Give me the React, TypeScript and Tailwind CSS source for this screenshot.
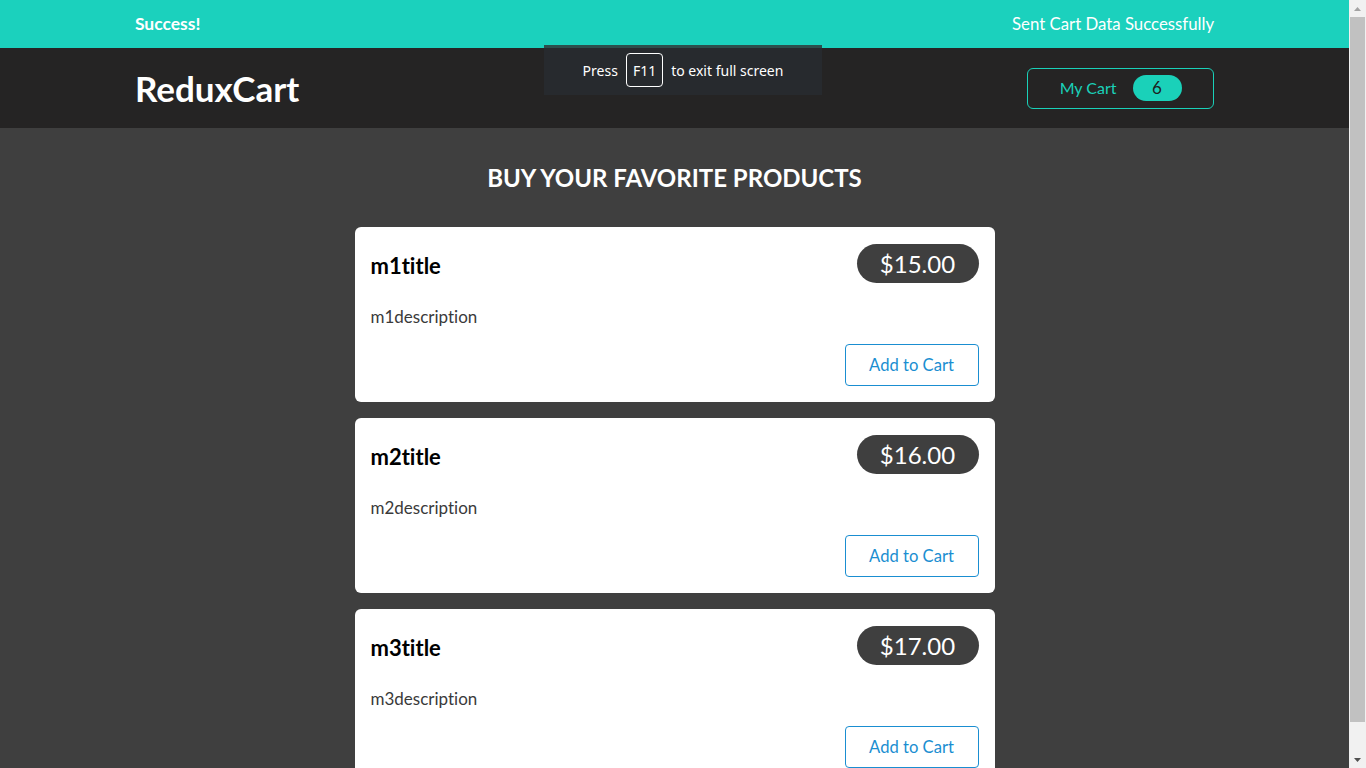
const products = [
  { id: 'm1', title: 'm1title', price: 15, description: 'm1description' },
  { id: 'm2', title: 'm2title', price: 16, description: 'm2description' },
  { id: 'm3', title: 'm3title', price: 17, description: 'm3description' },
];

function Notification() {
  return (
    <section className="w-full h-12 shrink-0 bg-[#1bd1bd] flex items-center justify-between px-[10%] text-white">
      <h2 className="text-[17.5px] font-bold">Success!</h2>
      <p className="text-[16.8px]">Sent Cart Data Successfully</p>
    </section>
  );
}

function MainHeader() {
  return (
    <header className="w-full h-20 shrink-0 bg-[#252424] flex items-center justify-between px-[10%]">
      <h1 className="text-white text-[35px] font-bold">ReduxCart</h1>
      <button className="h-[41px] w-[187px] border border-[#1ad1b9] rounded-md flex items-center justify-center gap-4 text-[#1ad1b9] text-[16px]">
        <span>My Cart</span>
        <span className="h-[26px] w-[49px] rounded-full bg-[#1ad1b9] text-[#1e1e1e] text-[17px] flex items-center justify-center">6</span>
      </button>
    </header>
  );
}

function ProductItem({ title, price, description }: { title: string; price: number; description: string }) {
  return (
    <li className="bg-white rounded-md p-4">
      <header className="h-[41px] flex items-center justify-between">
        <h3 className="pt-[3px] text-[22px] font-bold text-black">{title}</h3>
        <div className="h-[39px] w-[122px] rounded-full bg-[#3f3f3f] text-white text-[24px] flex items-center justify-center">
          ${price.toFixed(2)}
        </div>
      </header>
      <p className="mt-[21px] h-6 leading-6 text-[17px] text-[#3a3a3a]">{description}</p>
      <div className="mt-[15px] flex justify-end">
        <button className="h-[42px] w-[134px] border border-[#1a8ed1] rounded text-[#1a8ed1] text-[16.6px]">
          Add to Cart
        </button>
      </div>
    </li>
  );
}

function FullscreenToast() {
  return (
    <div className="absolute left-[544px] top-[45px] w-[278px] h-[50px] pb-[3px] bg-[#272a2e] border-t-[3px] border-[#2c4f4c] flex items-center justify-center gap-2 text-white text-[14px] font-['Noto_Sans',sans-serif]">
      <span>Press</span>
      <span className="h-[34px] px-1.5 border border-white rounded flex items-center">F11</span>
      <span>to exit full screen</span>
    </div>
  );
}

function Scrollbar() {
  return (
    <div className="w-[17px] shrink-0 h-screen bg-[#f1f1f1] flex flex-col items-center">
      <div className="h-[17px] flex items-center justify-center">
        <svg width="7" height="4" viewBox="0 0 7 4"><path d="M3.5 0L7 4H0z" fill="#a3a3a3" /></svg>
      </div>
      <div className="w-[15px] h-[705px] bg-[#c1c1c1]" />
      <div className="flex-1" />
      <div className="h-[17px] flex items-center justify-center">
        <svg width="7" height="4" viewBox="0 0 7 4"><path d="M0 0h7L3.5 4z" fill="#505050" /></svg>
      </div>
    </div>
  );
}

export default function App() {
  return (
    <div className="relative h-screen overflow-hidden flex bg-[#3f3f3f] font-['Source_Sans_Pro','Lato',sans-serif] [font-variant-ligatures:none]">
      <div className="flex-1 min-w-0 flex flex-col">
        <Notification />
        <MainHeader />
        <main>
          <section className="w-[640px] mx-auto pb-4">
            <h2 className="my-8 text-center text-white text-[24px] font-bold uppercase leading-[35px]">
              Buy your favorite products
            </h2>
            <ul className="flex flex-col gap-4">
              {products.map((p) => (
                <ProductItem key={p.id} title={p.title} price={p.price} description={p.description} />
              ))}
            </ul>
          </section>
        </main>
      </div>
      <Scrollbar />
      <FullscreenToast />
    </div>
  );
}
